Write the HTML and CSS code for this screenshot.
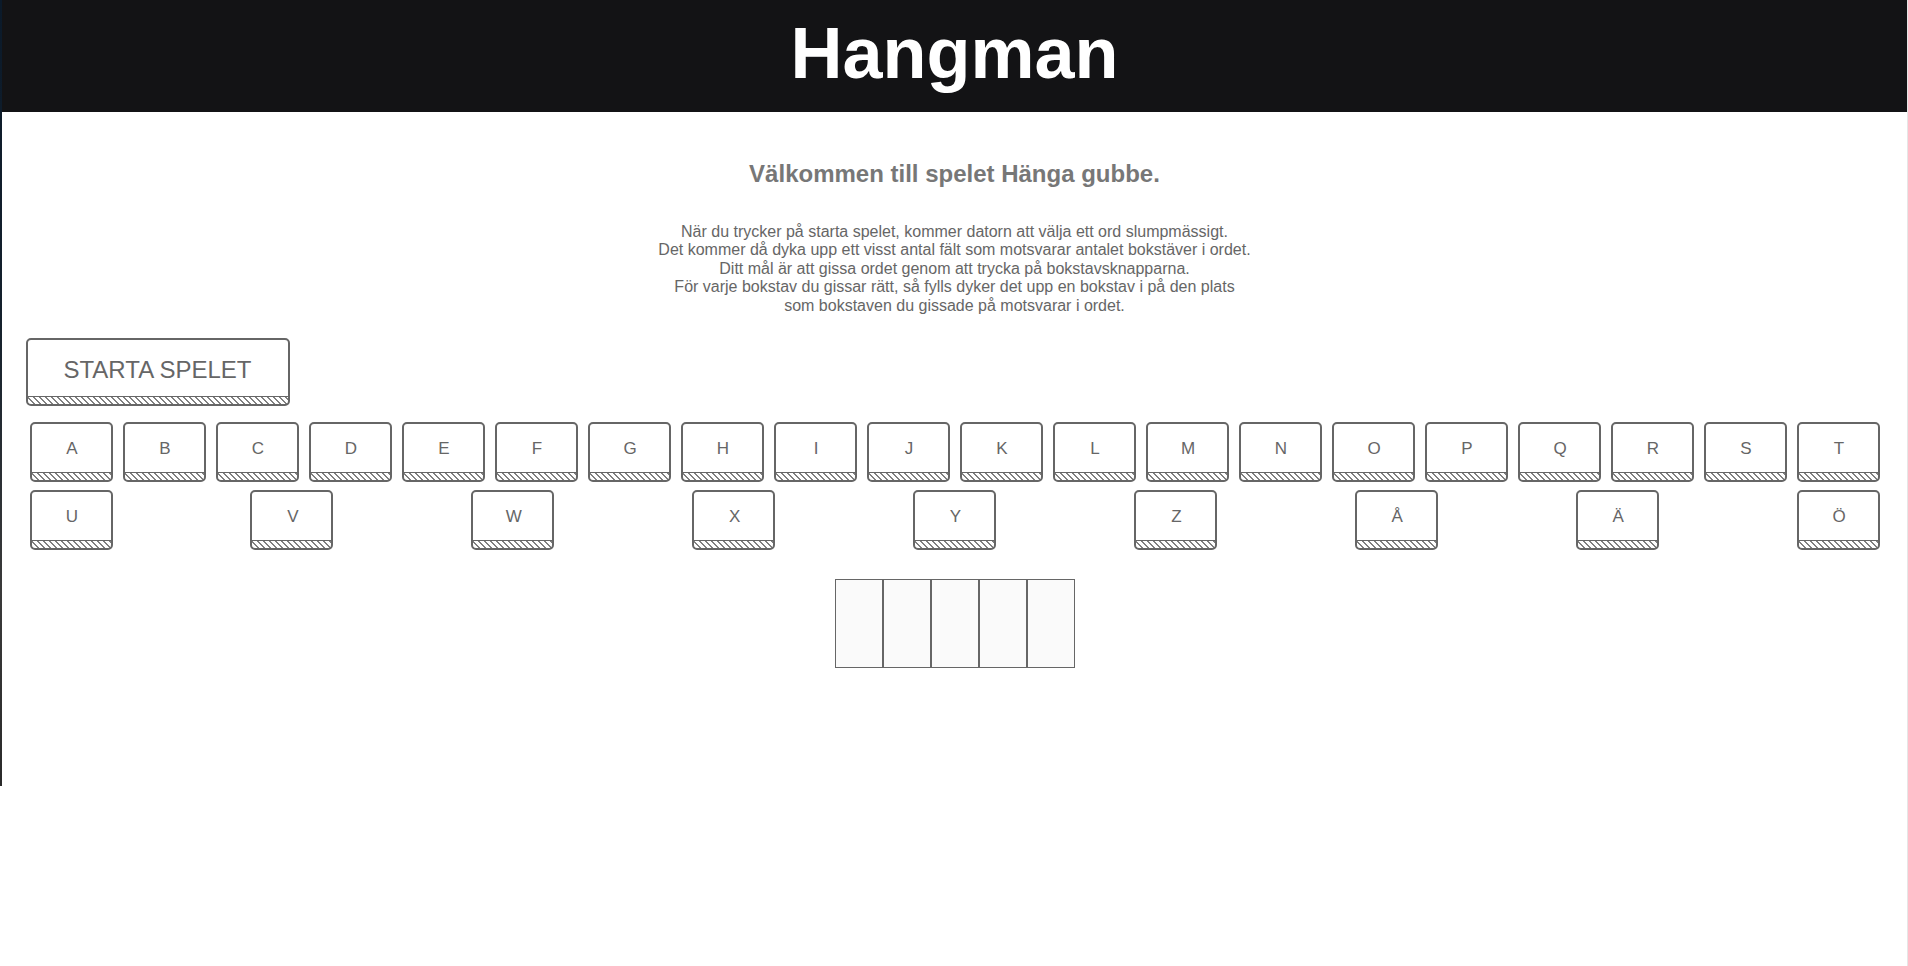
FILE: index.html
```html
<!DOCTYPE html>
<html lang="sv">
<head>
<meta charset="utf-8">
<title>Hangman</title>
<link rel="stylesheet" href="styles.css">
</head>
<body>
<div class="page">
  <div class="frame">
    <main class="app">
      <header class="topbar"><h1 class="brand">Hangman</h1></header>
      <section class="intro">
        <h2 class="welcome">Välkommen till spelet Hänga gubbe.</h2>
        <p class="rules">När du trycker på starta spelet, kommer datorn att välja ett ord slumpmässigt.<br>
        Det kommer då dyka upp ett visst antal fält som motsvarar antalet bokstäver i ordet.<br>
        Ditt mål är att gissa ordet genom att trycka på bokstavsknapparna.<br>
        För varje bokstav du gissar rätt, så fylls dyker det upp en bokstav i på den plats<br>
        som bokstaven du gissade på motsvarar i ordet.</p>
      </section>
      <section class="controls">
        <button class="start">STARTA SPELET</button>
        <div class="keys">
          <button class="key">A</button><button class="key">B</button><button class="key">C</button><button class="key">D</button><button class="key">E</button><button class="key">F</button><button class="key">G</button><button class="key">H</button><button class="key">I</button><button class="key">J</button><button class="key">K</button><button class="key">L</button><button class="key">M</button><button class="key">N</button><button class="key">O</button><button class="key">P</button><button class="key">Q</button><button class="key">R</button><button class="key">S</button><button class="key">T</button><button class="key">U</button><button class="key">V</button><button class="key">W</button><button class="key">X</button><button class="key">Y</button><button class="key">Z</button><button class="key">Å</button><button class="key">Ä</button><button class="key">Ö</button>
        </div>
      </section>
      <div class="word">
        <span class="slot"></span><span class="slot"></span><span class="slot"></span><span class="slot"></span><span class="slot"></span>
      </div>
    </main>
  </div>
</div>
</body>
</html>
```

FILE: styles.css
```css
* { box-sizing: border-box; }

html, body {
  margin: 0;
  padding: 0;
  background: #ffffff;
  font-family: "Liberation Sans", Arial, Helvetica, sans-serif;
}

.page {
  width: 1908px;
  min-height: 100vh;
  border-right: 1px solid #e6e6e6;
}

.frame {
  height: 786px;
  padding-left: 2px;
  background: linear-gradient(180deg, #0b1a2a 0%, #14202c 40%, #3a3a3a 75%, #2a2a2a 100%);
}

.app {
  height: 100%;
  background: #ffffff;
  display: flex;
  flex-direction: column;
}

.topbar {
  height: 112px;
  background: #131315;
  display: flex;
  justify-content: center;
  align-items: center;
}

.brand {
  margin: 0;
  color: #ffffff;
  font-size: 72px;
  font-weight: 700;
  line-height: 1;
  padding-bottom: 6px;
}

.intro {
  text-align: center;
  padding-top: 48px;
}

.welcome {
  margin: 0;
  font-size: 24px;
  font-weight: 700;
  color: #777777;
}

.rules {
  margin: 35px 0 0;
  font-size: 16px;
  line-height: 18.4px;
  color: #666666;
}

.controls {
  width: 1858px;
  margin: 23px auto 0;
}

.start {
  display: block;
  width: 264px;
  height: 68px;
  padding: 0 0 5px;
  font-family: inherit;
  font-size: 24px;
  color: #666666;
  border: 2px solid #666666;
  border-radius: 5px;
  background:
    linear-gradient(#666666, #666666) left bottom 7px / 100% 1px no-repeat,
    repeating-linear-gradient(45deg, #808080 0 1px, #ffffff 1px 4.24px) left bottom / 100% 7px no-repeat,
    #ffffff;
}

.keys {
  margin: 16px 4px 0 4px;
  display: flex;
  flex-wrap: wrap;
  justify-content: space-between;
  column-gap: 9px;
  row-gap: 8px;
}

.key {
  width: 83px;
  height: 60px;
  padding: 0 0 7px 2px;
  font-family: inherit;
  font-size: 17px;
  color: #666666;
  border: 2px solid #666666;
  border-radius: 5px;
  background:
    linear-gradient(#666666, #666666) left bottom 7px / 100% 1px no-repeat,
    repeating-linear-gradient(45deg, #808080 0 1px, #ffffff 1px 4.24px) left bottom / 100% 7px no-repeat,
    #ffffff;
}

.word {
  margin: 29px auto 0;
  display: flex;
}

.slot {
  width: 48px;
  height: 89px;
  border: 1px solid #666666;
  background: #fafafa;
}
```
